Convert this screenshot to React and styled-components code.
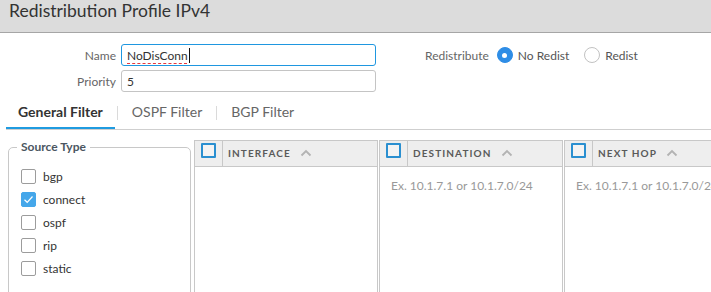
import React from 'react';
import styled, { createGlobalStyle } from 'styled-components';

const Global = createGlobalStyle`
  html, body { margin: 0; padding: 0; background: #fff; }
  body { font-family: Lato, "Open Sans", sans-serif; color: #333; overflow: hidden; }
  * { box-sizing: border-box; }
`;

const Page = styled.div`
  width: 711px;
  height: 292px;
  overflow: hidden;
`;

const TitleBar = styled.header`
  height: 33px;
  background: #dcdcdc;
  border-bottom: 1px solid #a6a6a6;
  padding: 0 0 0 9px;
`;

const Title = styled.h1`
  margin: 0;
  font-size: 17.5px;
  line-height: 22px;
  font-weight: 400;
  color: #333;
`;

const FormRow = styled.div`
  display: flex;
  align-items: flex-start;
  padding-top: 11px;
`;

const Fields = styled.div`
  display: grid;
  grid-template-columns: 116px 255px;
  column-gap: 5px;
  row-gap: 4px;
  align-items: center;
`;

const Label = styled.label`
  text-align: right;
  font-size: 12px;
  color: #666;
`;

const Field = styled.div`
  height: 22px;
  border: 1px solid ${p => (p.$focused ? '#1f97e0' : '#c4c4c4')};
  border-radius: 3px;
  padding: 0 5px;
  display: flex;
  align-items: center;
  font-size: 12px;
  color: #333;
`;

const Typed = styled.span`
  text-decoration-line: underline;
  text-decoration-style: dashed;
  text-decoration-color: #e8383d;
  text-decoration-thickness: 1px;
  text-underline-offset: 3px;
`;

const Caret = styled.span`
  display: inline-block;
  width: 1px;
  height: 15px;
  background: #111;
  margin-left: 1px;
`;

const RadioGroup = styled.div`
  display: flex;
  align-items: center;
  height: 22px;
  margin-left: 49px;
  font-size: 12px;
`;

const GroupLabel = styled.span`
  color: #666;
  margin-right: 8px;
`;

const RadioOption = styled.span`
  display: flex;
  align-items: center;
  gap: 5px;
  color: #555;
  margin-right: 15px;
`;

const RadioDot = styled.span`
  width: 16px;
  height: 16px;
  border-radius: 50%;
  background: ${p => (p.$on ? '#2e8de6' : '#fff')};
  border: 1px solid ${p => (p.$on ? '#2e8de6' : '#c2c2c2')};
  display: flex;
  align-items: center;
  justify-content: center;
  &::after {
    content: '';
    width: 5px;
    height: 5px;
    border-radius: 50%;
    background: ${p => (p.$on ? '#fff' : 'transparent')};
  }
`;

const TabBar = styled.nav`
  display: flex;
  align-items: center;
  margin: 3px 0 0 6px;
  border-bottom: 1px solid #cfcfcf;
`;

const Tab = styled.div`
  height: 34px;
  padding: 0 12px;
  display: flex;
  align-items: center;
  font-size: 14px;
  font-weight: ${p => (p.$active ? 700 : 400)};
  color: ${p => (p.$active ? '#333' : '#666')};
  border-bottom: 2px solid ${p => (p.$active ? '#1f9be0' : 'transparent')};
`;

const TabSep = styled.span`
  width: 1px;
  height: 14px;
  background: #dadada;
  margin: 2px 2px 0;
`;

const Content = styled.div`
  display: flex;
  align-items: flex-start;
  gap: 3px;
  padding: 10px 0 0 8px;
`;

const SourceBox = styled.fieldset`
  margin: 0;
  width: 183px;
  height: 190px;
  flex-shrink: 0;
  border: 1px solid #c8c8c8;
  border-radius: 5px;
  padding: 11px 0 0 12px;
`;

const Legend = styled.legend`
  padding: 0 4px;
  margin-left: -4px;
  font-size: 12px;
  line-height: 14px;
  font-weight: 700;
  color: #4b5661;
`;

const CheckRow = styled.label`
  display: flex;
  align-items: center;
  gap: 7px;
  height: 23px;
  font-size: 12px;
  color: #333;
`;

const Box = styled.span`
  width: 15px;
  height: 15px;
  border-radius: 2px;
  border: 1px solid ${p => (p.$checked ? '#45a7ea' : '#9c9c9c')};
  background: ${p => (p.$checked ? '#45a7ea' : '#fff')};
  display: flex;
  align-items: center;
  justify-content: center;
`;

const PanelGroup = styled.div`
  display: flex;
  gap: 1px;
  flex-shrink: 0;
`;

const Panel = styled.section`
  width: 184px;
  height: 170px;
  flex-shrink: 0;
  border: 1px solid #c8c8c8;
  display: flex;
  flex-direction: column;
`;

const PanelHeader = styled.div`
  height: 26px;
  background: #eeeeee;
  border-bottom: 1px solid #c8c8c8;
  display: flex;
  align-items: stretch;
`;

const SelectCell = styled.div`
  padding: 2px 6px 0 6px;
  border-right: 1px solid #c8c8c8;
`;

const HeadBox = styled.span`
  display: block;
  width: 15px;
  height: 15px;
  border: 2px solid #2a8fd0;
  border-radius: 1px;
  background: #f3f3f3;
`;

const HeadTitle = styled.div`
  display: flex;
  align-items: center;
  gap: 9px;
  padding: 0 0 1px 5px;
  font-size: 10px;
  font-weight: 700;
  letter-spacing: 1.1px;
  color: #5a5a5a;
  text-transform: uppercase;
`;

const PanelBody = styled.div`
  padding: 8px 6px;
`;

const Entry = styled.textarea`
  display: block;
  width: 100%;
  height: 20px;
  padding: 3px 5px;
  border: none;
  outline: none;
  resize: none;
  overflow: hidden;
  font-family: Lato, "Open Sans", sans-serif;
  font-size: 12px;
  color: #333;
  background: transparent;
  &::placeholder { color: #999; }
`;

const Check = () => (
  <svg width="11" height="9" viewBox="0 0 11 9">
    <path d="M1.5 4.8 L4.2 7.3 L9.5 1.5" fill="none" stroke="#fff" strokeWidth="1.2" />
  </svg>
);

const SortUp = () => (
  <svg width="12" height="8" viewBox="0 0 12 8">
    <path d="M1.5 6.5 L6 2 L10.5 6.5" fill="none" stroke="#b3b3b3" strokeWidth="1.8" />
  </svg>
);

const sources = [
  { name: 'bgp', on: false },
  { name: 'connect', on: true },
  { name: 'ospf', on: false },
  { name: 'rip', on: false },
  { name: 'static', on: false },
];

const columns = [
  { title: 'Interface', entry: false },
  { title: 'Destination', entry: true },
  { title: 'Next Hop', entry: true },
];

export default function App() {
  return (
    <Page>
      <Global />
      <TitleBar>
        <Title>Redistribution Profile IPv4</Title>
      </TitleBar>
      <FormRow>
        <Fields>
          <Label>Name</Label>
          <Field $focused>
            <Typed>NoDisConn</Typed>
            <Caret />
          </Field>
          <Label>Priority</Label>
          <Field>5</Field>
        </Fields>
        <RadioGroup>
          <GroupLabel>Redistribute</GroupLabel>
          <RadioOption>
            <RadioDot $on />
            No Redist
          </RadioOption>
          <RadioOption>
            <RadioDot />
            Redist
          </RadioOption>
        </RadioGroup>
      </FormRow>
      <TabBar>
        <Tab $active>General Filter</Tab>
        <TabSep />
        <Tab>OSPF Filter</Tab>
        <TabSep />
        <Tab>BGP Filter</Tab>
      </TabBar>
      <Content>
        <SourceBox>
          <Legend>Source Type</Legend>
          {sources.map(s => (
            <CheckRow key={s.name}>
              <Box $checked={s.on}>{s.on && <Check />}</Box>
              {s.name}
            </CheckRow>
          ))}
        </SourceBox>
        <PanelGroup>
          {columns.map(c => (
            <Panel key={c.title}>
              <PanelHeader>
                <SelectCell>
                  <HeadBox />
                </SelectCell>
                <HeadTitle>
                  {c.title}
                  <SortUp />
                </HeadTitle>
              </PanelHeader>
              <PanelBody>
                {c.entry && <Entry placeholder="Ex. 10.1.7.1 or 10.1.7.0/24" />}
              </PanelBody>
            </Panel>
          ))}
        </PanelGroup>
      </Content>
    </Page>
  );
}
